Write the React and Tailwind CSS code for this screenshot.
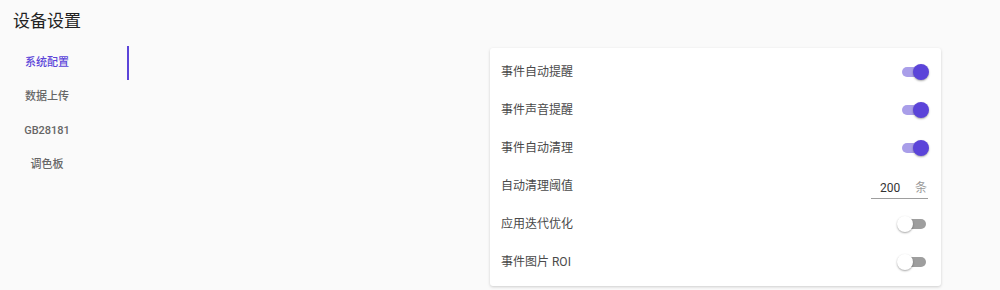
import React, { useState } from "react";

const tabs = ["系统配置", "数据上传", "GB28181", "调色板"];

const Toggle = ({ on, onClick }) => (
  <button onClick={onClick} className="relative w-[28px] h-[16px] flex items-center">
    <span
      className={
        "absolute left-[2px] w-[24px] h-[10px] rounded-full " +
        (on ? "bg-[#a99ee9]" : "bg-[#9e9e9e]")
      }
    ></span>
    <span
      className={
        "absolute top-0 w-[16px] h-[16px] rounded-full shadow-[0_1px_2px_rgba(0,0,0,0.35)] " +
        (on ? "left-[13px] bg-[#5b44d9]" : "left-[-3px] bg-white")
      }
    ></span>
  </button>
);

const App = () => {
  const [active, setActive] = useState(0);
  const [flags, setFlags] = useState([true, true, true, false, false]);
  const flip = (i) => setFlags(flags.map((f, j) => (j === i ? !f : f)));

  const rows = [
    { label: "事件自动提醒", idx: 0 },
    { label: "事件声音提醒", idx: 1 },
    { label: "事件自动清理", idx: 2 },
    { label: "自动清理阈值", input: true },
    { label: "应用迭代优化", idx: 3 },
    { label: "事件图片 ROI", idx: 4 },
  ];

  return (
    <div
      className="w-[1000px] h-[290px] bg-[#fafafa] overflow-hidden"
      style={{ fontFamily: "Roboto, 'Noto Sans CJK SC', sans-serif" }}
    >
      {/* Title */}
      <h1 className="pl-[13px] pt-[9px] text-[17px] leading-[24px] text-[#222]">设备设置</h1>

      <div className="flex mt-[12px]">
        {/* Tabs */}
        <div className="w-[129px] flex flex-col pt-[1px]">
          {tabs.map((t, i) => (
            <button
              key={t}
              onClick={() => setActive(i)}
              className="relative h-[34px] flex items-center"
            >
              <span
                className={
                  "w-[94px] text-center text-[11px] font-medium " +
                  (active === i ? "text-[#5b44d9]" : "text-[#666]")
                }
              >
                {t}
              </span>
              {active === i && (
                <span className="absolute right-0 top-0 w-[2px] h-full bg-[#5b44d9]"></span>
              )}
            </button>
          ))}
        </div>

        {/* Card */}
        <div className="ml-[361px] mt-[3px] w-[451px] h-[238px] bg-white rounded-[3px] shadow-[0_1px_3px_rgba(0,0,0,0.18)] pt-[5px] pl-[11px] pr-[13px]">
          {rows.map((r) => (
            <div key={r.label} className="h-[38px] flex items-center justify-between">
              <span className="text-[12px] text-[#4a4a4a]">{r.label}</span>
              {r.input ? (
                <div className="w-[57px] h-[22px] mt-[4px] flex items-center border-b border-[#9e9e9e] pl-[9px]">
                  <span className="text-[12px] text-[#333] w-[35px]">200</span>
                  <span className="text-[12px] text-[#999]">条</span>
                </div>
              ) : (
                <Toggle on={flags[r.idx]} onClick={() => flip(r.idx)} />
              )}
            </div>
          ))}
        </div>
      </div>
    </div>
  );
};

export default App;
